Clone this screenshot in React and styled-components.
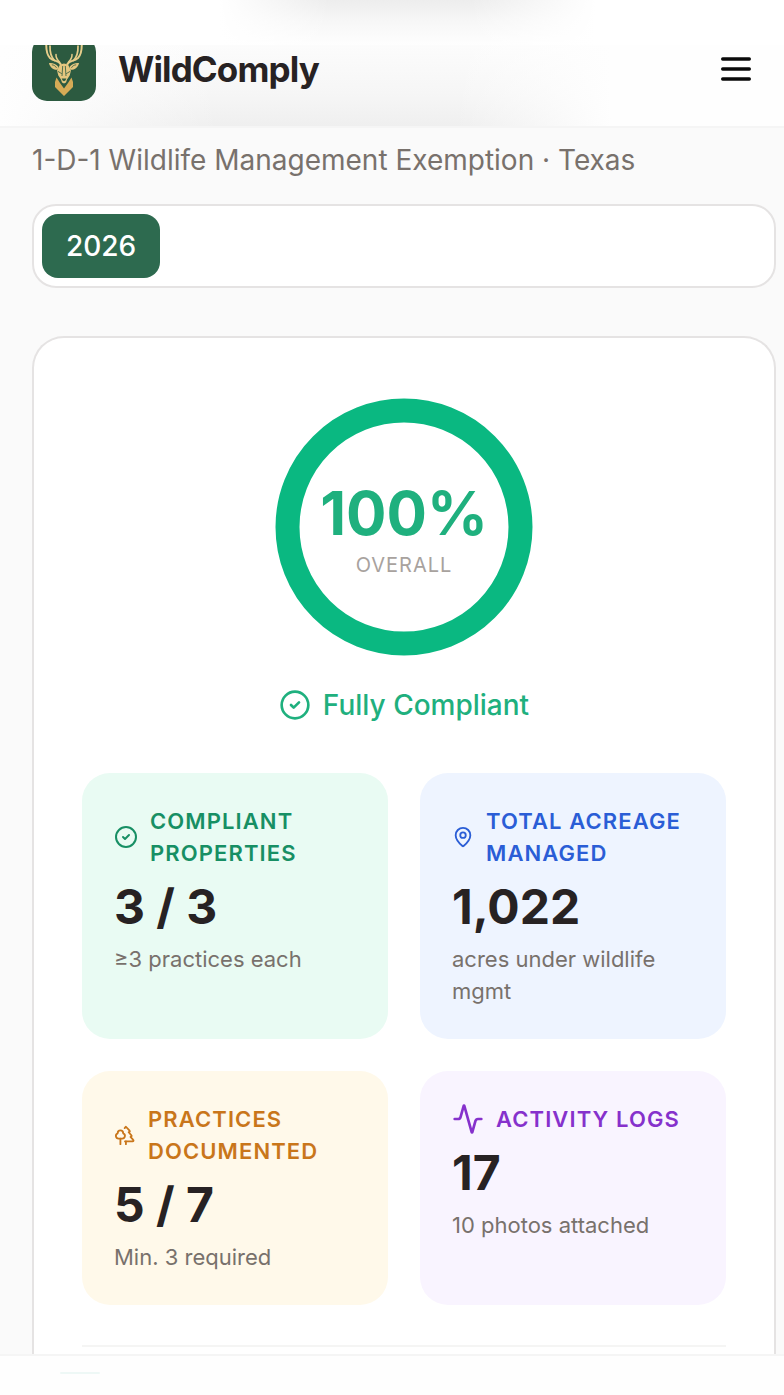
import React from 'react'
import styled, { createGlobalStyle } from 'styled-components'
import { CircleCheck, MapPin, Trees, Activity } from 'lucide-react'

const stats = [
  { id: 'compliant', icon: CircleCheck, iconSize: 24, label: 'Compliant Properties', value: '3 / 3', note: '≥3 practices each', color: '#178f64', bg: '#e9fbf3' },
  { id: 'acreage', icon: MapPin, iconSize: 22, label: 'Total Acreage Managed', value: '1,022', note: 'acres under wildlife mgmt', color: '#2a5dd6', bg: '#eef4ff' },
  { id: 'practices', icon: Trees, iconSize: 22, label: 'Practices Documented', value: '5 / 7', note: 'Min. 3 required', color: '#c9761a', bg: '#fff9ea' },
  { id: 'logs', icon: Activity, iconSize: 32, label: 'Activity Logs', value: '17', note: '10 photos attached', color: '#8631cc', bg: '#f9f4ff' },
]

function DeerLogo() {
  return (
    <svg viewBox="0 0 64 64" width="64" height="64" aria-hidden="true">
      <defs>
        <g id="half">
          <path d="M28.500 27 C27 23.500 22 24.500 18 21 C14.500 17.500 14 13 14.300 6" fill="none" stroke="#e6cd8a" strokeWidth="2" strokeLinecap="round" />
          <path d="M22.500 23.500 C19 20 17.800 15 18 9" fill="none" stroke="#e6cd8a" strokeWidth="1.700" strokeLinecap="round" />
          <path d="M27.500 25 C25 22.500 23.800 20.500 24 17.500" fill="none" stroke="#e6cd8a" strokeWidth="1.500" strokeLinecap="round" />
          <path d="M17 26 C20 25.500 24.500 27 26.500 30 L25.500 32.800 C22 33 18 31 17 26Z" fill="#e4c67f" />
          <path d="M19.800 27.800 C22 28 23.500 29 24.500 30.800" fill="none" stroke="#2c5a40" strokeWidth="0.800" />
          <path d="M32 26.500 L28 27.500 L25 33.500 L26.300 38.500 L29 42.500 L30 45.500 L32 46.500Z" fill="#e4c67f" />
          <path d="M25.800 34.300 L29.800 36.700 M30.700 29 L30 39" fill="none" stroke="#2c5a40" strokeWidth="0.800" />
          <path d="M32 41.500 L29.600 41.500 L30.600 43.600 L32 44.200Z" fill="#2c5a40" />
          <path d="M24.500 40.500 L23 45 L23 50 L32 59 L32 51.500 L28 46Z" fill="#d6ab56" />
        </g>
      </defs>
      <rect width="64" height="64" rx="15" fill="#2c5a40" />
      <use href="#half" />
      <use href="#half" transform="translate(64 0) scale(-1 1)" />
    </svg>
  )
}

export default function App() {
  return (
    <Page>
      <GlobalStyle />
      <StatusArea />
      <Header>
        <Brand href="#">
          <DeerLogo />
          <BrandName>WildComply</BrandName>
        </Brand>
        <MenuButton type="button" aria-label="Menu">
          <svg viewBox="0 0 24 24" width="40" height="40" fill="none" stroke="#0a0a0a" strokeWidth="2" strokeLinecap="round">
            <path d="M4 6h16M4 12h16M4 18h16" />
          </svg>
        </MenuButton>
      </Header>
      <Main>
        <Subtitle>1-D-1 Wildlife Management Exemption · Texas</Subtitle>
        <YearBar>
          <YearButton type="button">2026</YearButton>
        </YearBar>
        <SummaryCard>
          <Ring>
            <svg viewBox="0 0 280 280" width="280" height="280" aria-hidden="true">
              <circle cx="140" cy="140" r="116.500" fill="none" stroke="#0ab881" strokeWidth="24" />
            </svg>
            <RingText>
              <Percent>100%</Percent>
              <Overall>Overall</Overall>
            </RingText>
          </Ring>
          <Status>
            <CircleCheck size={32} />
            Fully Compliant
          </Status>
          <StatGrid>
            {stats.map(({ icon: Icon, ...stat }) => (
              <Stat key={stat.id} $bg={stat.bg}>
                <StatLabel $color={stat.color}>
                  <Icon size={stat.iconSize} />
                  <span>{stat.label}</span>
                </StatLabel>
                <StatValue>{stat.value}</StatValue>
                <StatNote>{stat.note}</StatNote>
              </Stat>
            ))}
          </StatGrid>
          <Divider />
        </SummaryCard>
      </Main>
      <BottomBar>
        <ActiveMark />
      </BottomBar>
    </Page>
  )
}

const GlobalStyle = createGlobalStyle`
  *{
    box-sizing:border-box;
  }
  body{
    margin:0;
    background:#fafafa;
    color:#272223;
    font-family:Inter, "Liberation Sans", sans-serif;
  }
`;
const Page = styled.div`
  display:flex;
  flex-direction:column;
  min-height:100vh;
`;
const StatusArea = styled.div`
  height:45px;
  background:
    linear-gradient(90deg, #fff 28%, rgba(255,255,255,0) 42%, rgba(255,255,255,0) 60%, #fff 76%),
    linear-gradient(#ededed, #f7f7f7 50%, #fefefe);
`;
const Header = styled.header`
  display:flex;
  align-items:center;
  justify-content:space-between;
  height:83px;
  padding:0 28px 34px 32px;
  overflow:hidden;
  border-bottom:2px solid #f5f5f5;
  background:
    linear-gradient(90deg, #fefefe 0%, rgba(254,254,254,0) 28%, rgba(254,254,254,0) 58%, #fefefe 78%),
    linear-gradient(#fcfcfc, #f6f6f6 60%, #efefef);
`;
const Brand = styled.a`
  display:flex;
  align-items:center;
  gap:22px;
  color:inherit;
  text-decoration:none;
`;
const BrandName = styled.span`
  font-size:35px;
  line-height:48px;
  font-weight:700;
  letter-spacing:-0.025em;
`;
const MenuButton = styled.button`
  display:flex;
  padding:0;
  border:0;
  background:none;
`;
const Main = styled.main`
  display:flex;
  flex:1;
  flex-direction:column;
  padding:12px 8px 0 32px;
`;
const Subtitle = styled.p`
  margin:0 0 24px;
  font-size:28px;
  line-height:40px;
  color:#78716c;
`;
const YearBar = styled.div`
  display:flex;
  margin-bottom:48px;
  padding:8px;
  border:2px solid #e5e3e3;
  border-radius:24px;
  background:#fff;
`;
const YearButton = styled.button`
  padding:0 24px;
  border:0;
  border-radius:16px;
  background:#2d6a4f;
  color:#fff;
  font-family:inherit;
  font-size:28px;
  line-height:64px;
  font-weight:500;
`;
const SummaryCard = styled.section`
  display:flex;
  flex:1;
  flex-direction:column;
  align-items:center;
  padding:49px 48px 7px;
  border:2px solid #e5e3e3;
  border-bottom:0;
  border-radius:32px 32px 0 0;
  background:#fff;
`;
const Ring = styled.div`
  display:grid;
  place-items:center;
  > *{
    grid-area:1 / 1;
  }
`;
const RingText = styled.div`
  text-align:center;
`;
const Percent = styled.div`
  font-size:60px;
  line-height:76px;
  font-weight:700;
  color:#1fb07e;
`;
const Overall = styled.div`
  font-size:20px;
  line-height:28px;
  letter-spacing:0.05em;
  text-transform:uppercase;
  color:#a8a29e;
`;
const Status = styled.div`
  display:flex;
  align-items:center;
  gap:12px;
  margin:16px 0 46px;
  font-size:28px;
  line-height:44px;
  font-weight:500;
  color:#1fb07e;
`;
const StatGrid = styled.div`
  display:grid;
  grid-template-columns:1fr 1fr;
  gap:32px;
  width:100%;
`;
const Stat = styled.div`
  padding:32px;
  border-radius:28px;
  background:${props => props.$bg};
`;
const StatLabel = styled.div`
  display:flex;
  align-items:center;
  gap:12px;
  font-size:22px;
  line-height:32px;
  font-weight:600;
  letter-spacing:0.05em;
  text-transform:uppercase;
  color:${props => props.$color};
  svg{
    flex-shrink:0;
  }
`;
const StatValue = styled.div`
  margin:6px 0 4px;
  font-size:48px;
  line-height:64px;
  font-weight:700;
`;
const StatNote = styled.div`
  font-size:22px;
  line-height:32px;
  color:#78716c;
`;
const Divider = styled.hr`
  width:100%;
  margin:40px 0 0;
  border:0;
  border-top:2px solid #f5f5f4;
`;
const BottomBar = styled.nav`
  height:41px;
  padding:16px 60px 0;
  border-top:2px solid #f5f5f5;
  background:#fefefe;
`;
const ActiveMark = styled.div`
  width:40px;
  height:2px;
  border-radius:2px;
  background:#eef8f6;
`;
